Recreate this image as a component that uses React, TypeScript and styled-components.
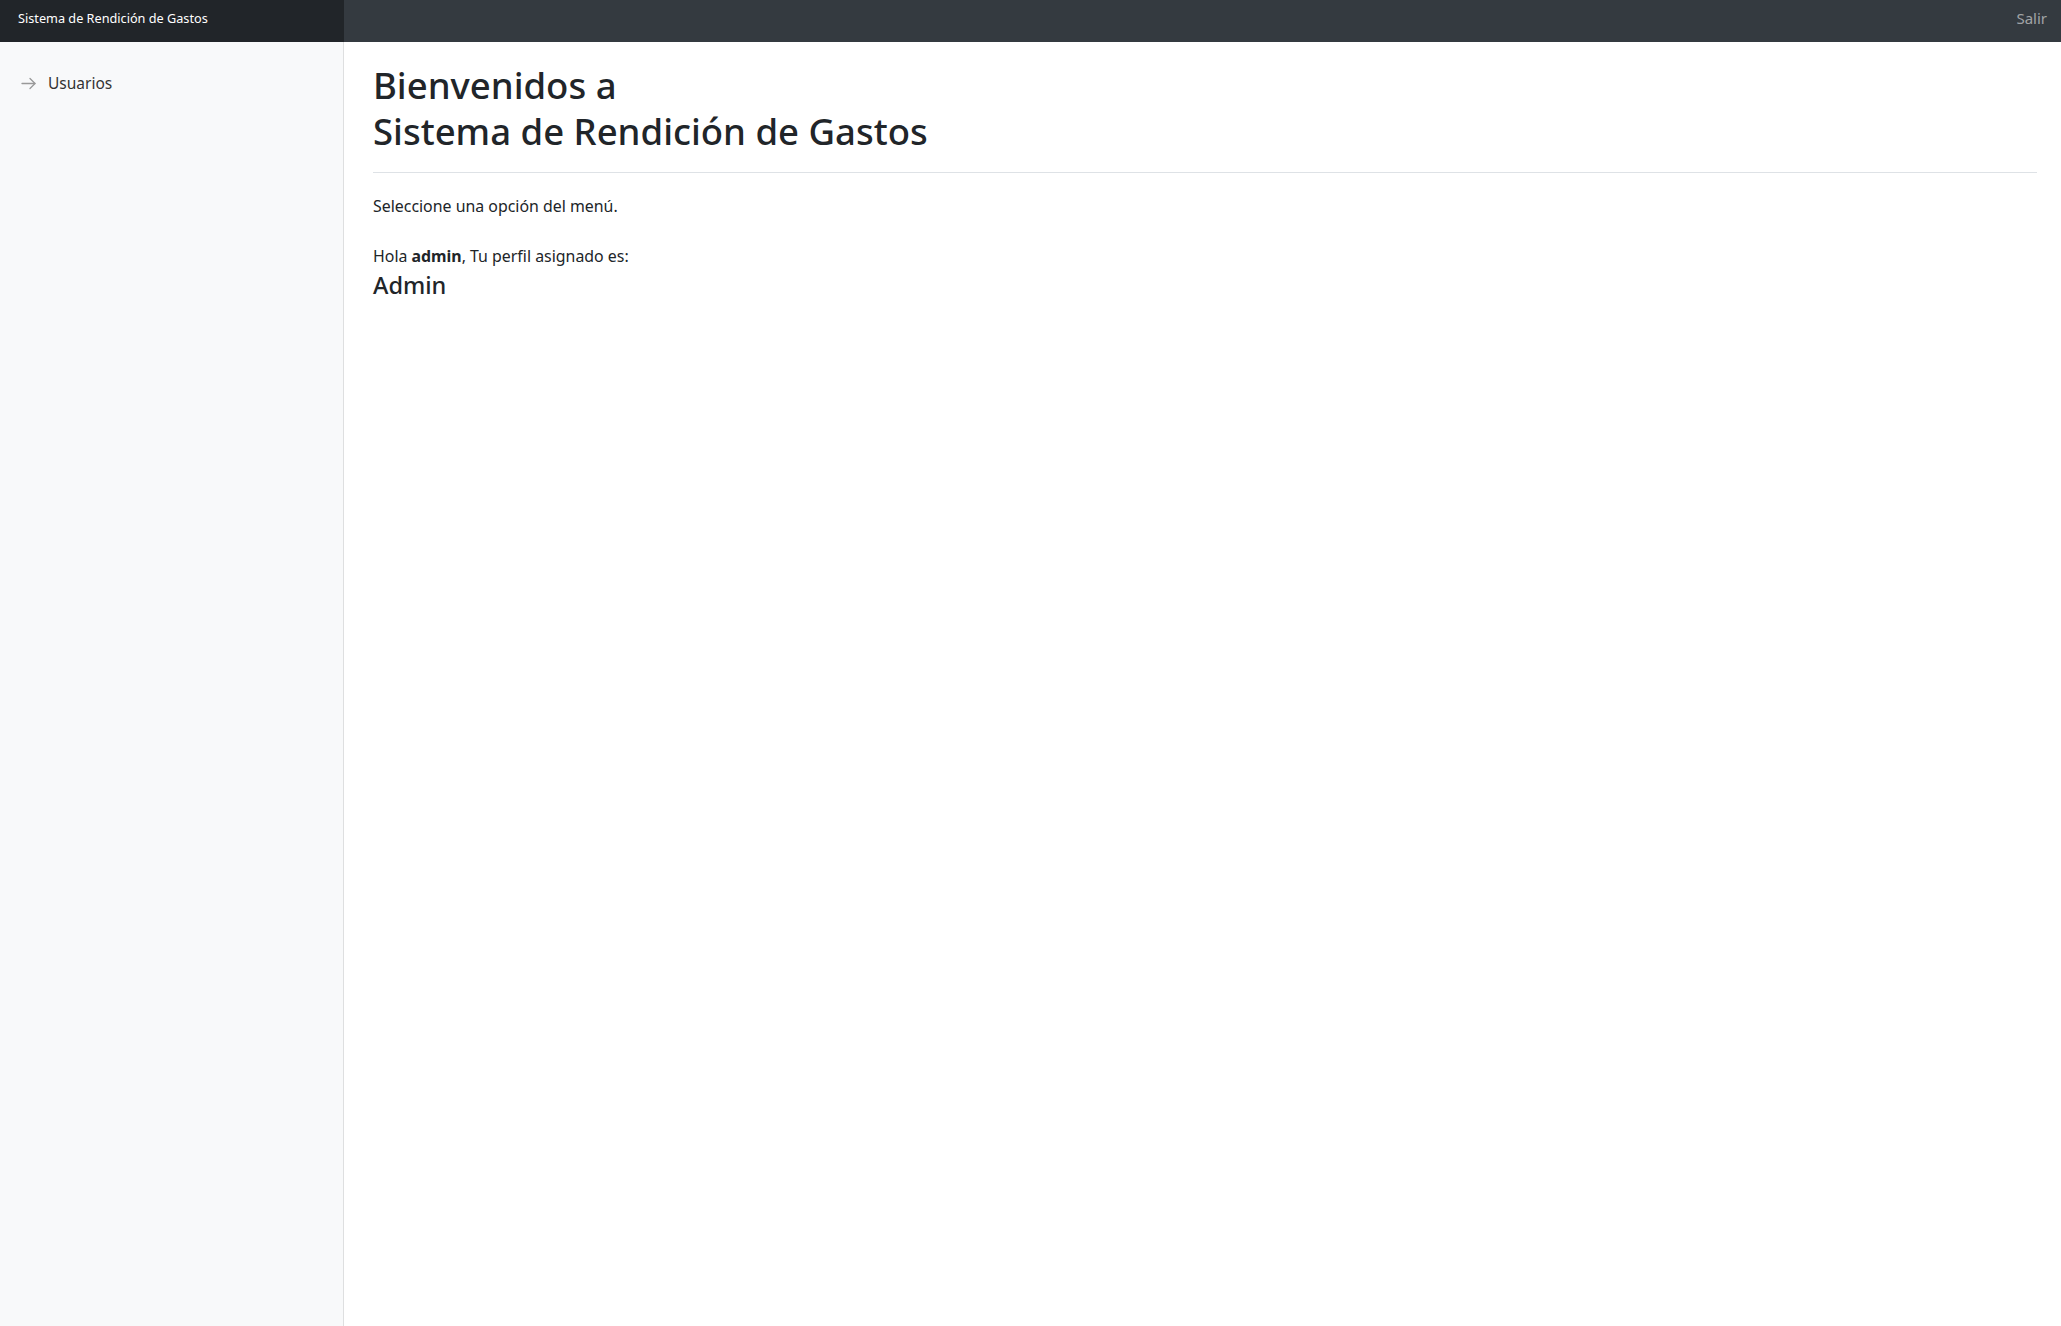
import React from 'react';
import styled, { createGlobalStyle } from 'styled-components';

const GlobalStyle = createGlobalStyle`
    html, body {
        margin: 0;
        padding: 0;
        background: #ffffff;
    }
    body {
        font-family: 'Noto Sans', 'Open Sans', Arial, sans-serif;
        color: #212529;
        font-size: 16px;
        line-height: 1.5;
    }
`;

const Page = styled.div`
    display: flex;
    flex-direction: column;
    min-height: 1326px;
`;

const Navbar = styled.header`
    display: flex;
    align-items: stretch;
    height: 42px;
    background-color: #343a40;
`;

const Brand = styled.div`
    display: flex;
    align-items: center;
    width: 344px;
    padding: 0 0 5px 18px;
    box-sizing: border-box;
    background-color: #212529;
    color: #ffffff;
    font-size: 12.7px;
`;

const NavSpacer = styled.div`
    flex: 1;
`;

const NavLink = styled.a`
    display: flex;
    align-items: center;
    padding: 0 14px 5px 16px;
    color: rgba(255, 255, 255, 0.55);
    font-size: 15px;
    text-decoration: none;
    cursor: pointer;
`;

const Body = styled.div`
    display: flex;
    flex: 1;
`;

const Sidebar = styled.nav`
    width: 344px;
    flex-shrink: 0;
    background-color: #f8f9fa;
    box-shadow: inset -1px 0 0 rgba(0, 0, 0, 0.1);
    padding-top: 26px;
    box-sizing: border-box;
`;

const MenuItem = styled.a`
    display: flex;
    align-items: center;
    gap: 12px;
    padding: 4px 21px;
    color: #333333;
    font-size: 15.5px;
    text-decoration: none;
    cursor: pointer;

    svg {
        flex-shrink: 0;
        color: #999999;
    }
`;

const Main = styled.main`
    flex: 1;
    padding: 0 24px 0 29px;
`;

const Header = styled.div`
    padding-top: 20px;
    padding-bottom: 18px;
    border-bottom: 1px solid #dee2e6;
    margin-bottom: 21px;
`;

const Title = styled.h1`
    margin: 0;
    font-size: 36.5px;
    font-weight: 500;
    line-height: 46px;
    color: #212529;
`;

const Text = styled.p<{ gap?: number }>`
    margin: 0 0 ${(p) => p.gap ?? 0}px;
    font-size: 15.9px;
    line-height: 24px;
`;

const Role = styled.h4`
    margin: 3px 0 0;
    font-size: 23.5px;
    font-weight: 500;
    line-height: 1.2;
`;

function ArrowRight() {
    return (
        <svg width="15" height="15" viewBox="0 0 15 15" fill="none" stroke="currentColor" strokeWidth="1.3" strokeLinecap="round" strokeLinejoin="round">
            <line x1="1" y1="7.5" x2="14" y2="7.5" />
            <polyline points="9 2.5 14 7.5 9 12.5" />
        </svg>
    );
}

export default function App() {
    return (
        <>
            <GlobalStyle />
            <Page>
                <Navbar>
                    <Brand>Sistema de Rendición de Gastos</Brand>
                    <NavSpacer />
                    <NavLink>Salir</NavLink>
                </Navbar>
                <Body>
                    <Sidebar>
                        <MenuItem>
                            <ArrowRight />
                            Usuarios
                        </MenuItem>
                    </Sidebar>
                    <Main>
                        <Header>
                            <Title>
                                Bienvenidos a
                                <br />
                                Sistema de Rendición de Gastos
                            </Title>
                        </Header>
                        <Text gap={26}>Seleccione una opción del menú.</Text>
                        <Text>
                            Hola <b>admin</b>, Tu perfil asignado es:
                        </Text>
                        <Role>Admin</Role>
                    </Main>
                </Body>
            </Page>
        </>
    );
}
